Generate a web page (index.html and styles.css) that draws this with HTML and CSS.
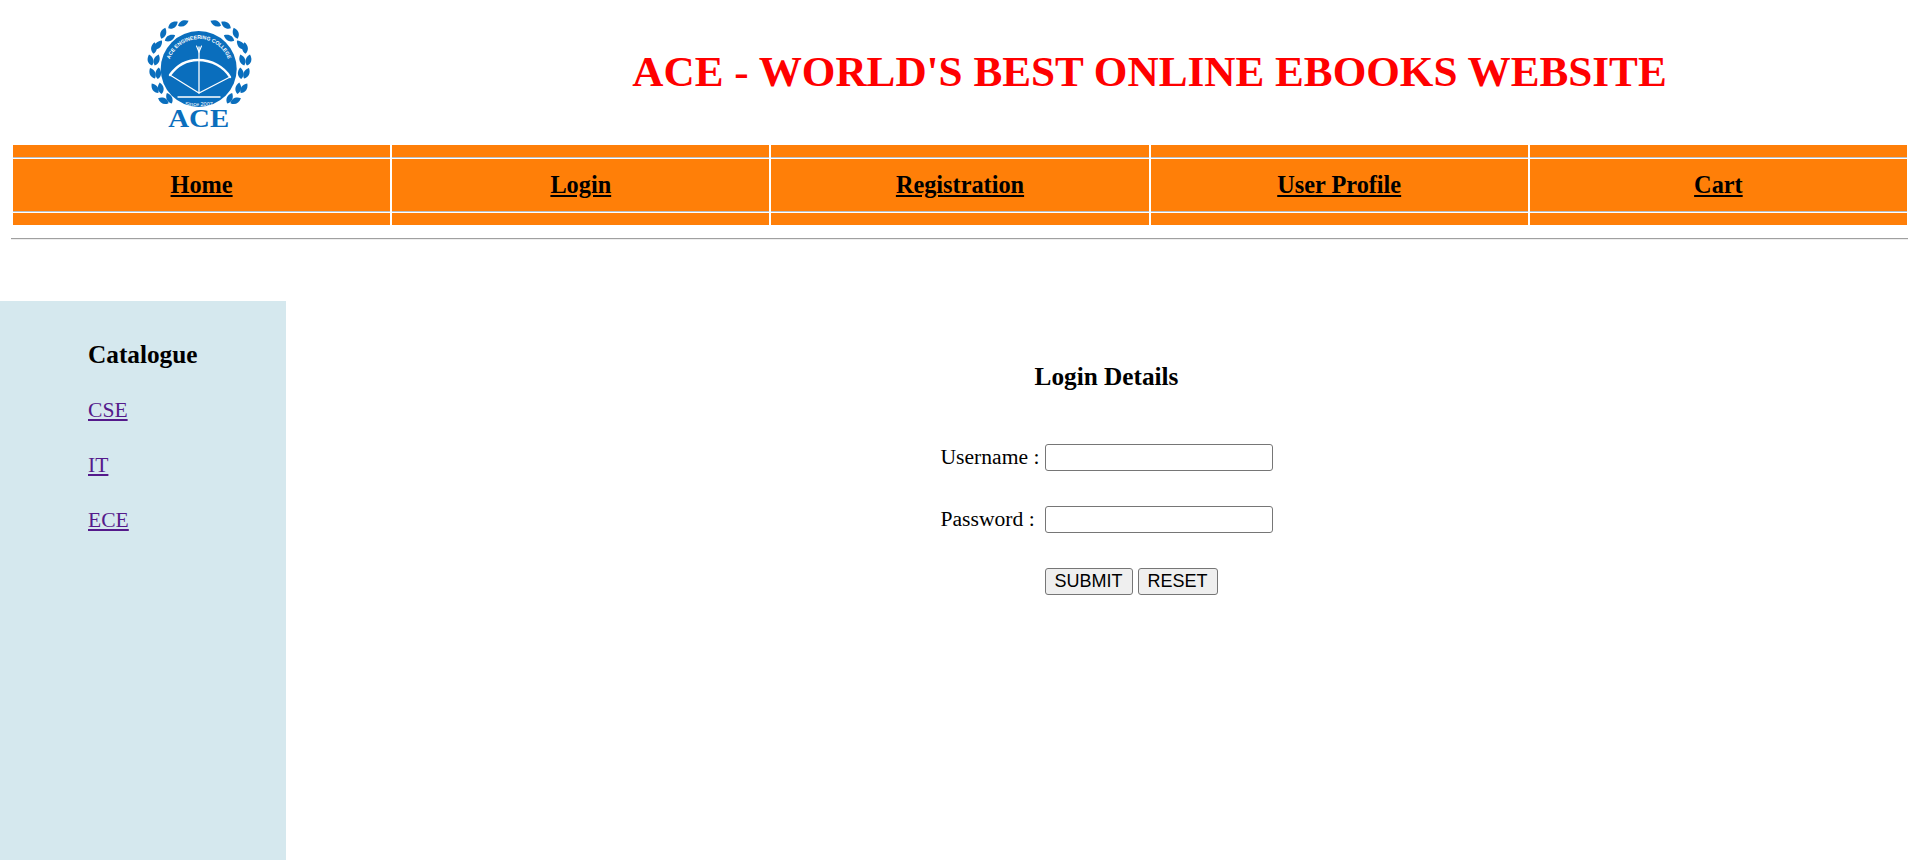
FILE: index.html
```html
<!DOCTYPE html>
<html lang="en">
<head>
    <meta charset="UTF-8">
    <meta name="viewport" content="width=device-width, initial-scale=1.0">
    <title>ACE Online Ebooks</title>
    <link rel="stylesheet" href="styles.css">
</head>
<body>
    <header class="header">
        <svg class="logo" viewBox="0 0 140 130" width="140" height="130" role="img" aria-label="ACE Engineering College logo">
            <defs>
                <path id="leaf" d="M0 5.800C3.800 2.800 3.800-2 0-5.800C-3.800-2-3.800 2.800 0 5.800Z"/>
                <g id="laurel" fill="#0a6ebd">
                    <use href="#leaf" transform="translate(53.300 13.300) rotate(65)"/>
                    <use href="#leaf" transform="translate(43 15) rotate(55)"/>
                    <use href="#leaf" transform="translate(40 28) rotate(62)"/>
                    <use href="#leaf" transform="translate(33.300 23.300) rotate(20)"/>
                    <use href="#leaf" transform="translate(28.300 35) rotate(40)"/>
                    <use href="#leaf" transform="translate(24 38) rotate(5)"/>
                    <use href="#leaf" transform="translate(26.700 50) rotate(20)"/>
                    <use href="#leaf" transform="translate(20.500 50) rotate(-15)"/>
                    <use href="#leaf" transform="translate(28.300 63.300) rotate(5)"/>
                    <use href="#leaf" transform="translate(22.500 63.300) rotate(-25)"/>
                    <use href="#leaf" transform="translate(30.700 78.300) rotate(-10)"/>
                    <use href="#leaf" transform="translate(25 78.300) rotate(-35)"/>
                    <use href="#leaf" transform="translate(39.300 88.300) rotate(-25)"/>
                    <use href="#leaf" transform="translate(33.300 90.700) rotate(-65)"/>
                </g>
                <path id="text-arc" d="M38 60A31 31 0 0 1 100 60"/>
            </defs>
            <use href="#laurel"/>
            <use href="#laurel" transform="translate(139 0) scale(-1 1)"/>
            <circle cx="68.700" cy="59" r="38" fill="#0a6ebd"/>
            <text class="logo-arc"><textPath href="#text-arc" startOffset="50%" text-anchor="middle">ACE ENGINEERING COLLEGE</textPath></text>
            <g fill="none" stroke="#fff" stroke-linecap="round">
                <path d="M69 37V83" stroke-width="1.300"/>
                <path d="M66.500 36L69 42L71.500 36" stroke-width="1.100"/>
                <path d="M40 65C48 54 58 50 68 50C82 50 94 57 100 67" stroke-width="2.400"/>
                <path d="M40 65L69 83L100 67" stroke-width="1.100"/>
                <path d="M48 87H90" stroke-width="1.300"/>
            </g>
            <text class="logo-since" x="69" y="96" text-anchor="middle">Since 2007</text>
            <text class="logo-name" text-anchor="middle" transform="translate(68.700 117) scale(1.130 1)">ACE</text>
        </svg>
        <h1 class="site-title">ACE - WORLD'S BEST ONLINE EBOOKS WEBSITE</h1>
    </header>

    <nav class="nav">
        <div class="nav-cell"><hr class="nav-line"><a href="#home">Home</a><hr class="nav-line"></div>
        <div class="nav-cell"><hr class="nav-line"><a href="#login">Login</a><hr class="nav-line"></div>
        <div class="nav-cell"><hr class="nav-line"><a href="#registration">Registration</a><hr class="nav-line"></div>
        <div class="nav-cell"><hr class="nav-line"><a href="#profile">User Profile</a><hr class="nav-line"></div>
        <div class="nav-cell"><hr class="nav-line"><a href="#cart">Cart</a><hr class="nav-line"></div>
    </nav>

    <hr class="page-rule">

    <div class="content">
        <aside class="sidebar">
            <h3>Catalogue</h3>
            <a href="#cse">CSE</a>
            <a href="#it">IT</a>
            <a href="#ece">ECE</a>
        </aside>

        <main class="main">
            <h3>Login Details</h3>
            <form class="login-form">
                <label for="username">Username :</label>
                <input type="text" id="username">
                <label for="password">Password :</label>
                <input type="password" id="password">
                <div class="form-buttons">
                    <button type="submit">SUBMIT</button>
                    <button type="reset">RESET</button>
                </div>
            </form>
        </main>
    </div>
</body>
</html>
```

FILE: styles.css
```css
html, body {
    height: 100%;
}
body {
    margin: 0;
    display: flex;
    flex-direction: column;
    overflow: hidden;
    font-family: "Liberation Serif", "Times New Roman", serif;
    font-size: 21.6px;
    color: #000;
    background: #fff;
}
.header {
    display: flex;
    height: 145px;
}
.logo {
    flex: none;
    margin: 10px 0 0 130px;
}
.logo-arc {
    font: bold 5.200px "Liberation Sans", Arial, sans-serif;
    fill: #fff;
}
.logo-since {
    font: 5.500px "Liberation Sans", Arial, sans-serif;
    fill: #fff;
}
.logo-name {
    font: bold 25.500px "Liberation Serif", serif;
    fill: #0a6ebd;
}
.site-title {
    flex: 1;
    margin: 46px 0 0;
    padding-left: 114px;
    font-size: 43.2px;
    line-height: 52px;
    text-align: center;
    color: #f00;
}
.nav {
    display: grid;
    grid-template-columns: repeat(5, 1fr);
    gap: 2px;
    margin: 0 8px 0 13px;
    flex: none;
}
.nav-cell {
    display: flex;
    flex-direction: column;
    padding: 12px 0;
    background: #ff7f08;
    text-align: center;
}
.nav-cell a {
    height: 52px;
    font-size: 24.3px;
    font-weight: bold;
    line-height: 52px;
    color: #000;
}
.nav-line {
    width: 100%;
    margin: 0;
    border: 0;
    border-top: 1px solid #b9c0c8;
    border-bottom: 1px solid #fff;
}
.page-rule {
    flex: none;
    align-self: stretch;
    margin: 13px 7px 61px 11px;
    border: 0;
    border-top: 1px solid #a0a0a0;
    border-bottom: 1px solid #eee;
}
.content {
    flex: 1;
    display: flex;
}
.sidebar {
    flex: none;
    box-sizing: border-box;
    width: 286px;
    padding: 39px 0 0 88px;
    background: #d5e8ee;
}
.sidebar h3 {
    margin: 0 0 29px;
    font-size: 25.27px;
}
.sidebar a {
    display: block;
    margin-bottom: 30px;
    color: #551a8b;
}
.main {
    flex: 1;
    padding: 61px 0 0 12px;
}
.main h3 {
    margin: 0 0 53px;
    font-size: 25.27px;
    text-align: center;
}
.login-form {
    display: grid;
    grid-template-columns: 104px 228px;
    row-gap: 35px;
    justify-content: center;
    align-items: center;
}
.login-form input {
    box-sizing: border-box;
    height: 27px;
    width: 228px;
    margin: 0;
    padding: 1px 3px;
    border: 1px solid #767676;
    border-radius: 3px;
    background: #fff;
}
.form-buttons {
    grid-column: 2;
    display: flex;
    gap: 5px;
}
.form-buttons button {
    box-sizing: border-box;
    height: 27px;
    padding: 0 9px;
    border: 1px solid #767676;
    border-radius: 3px;
    background: #efefef;
    font: 18px "Liberation Sans", Arial, sans-serif;
    color: #000;
}
```
